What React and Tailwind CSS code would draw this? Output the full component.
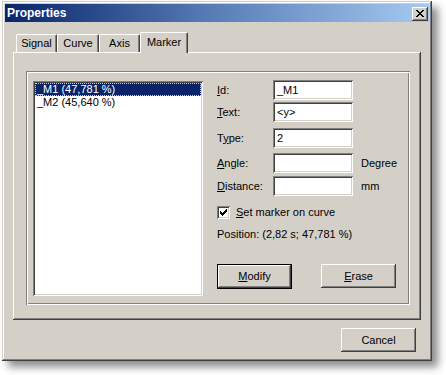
import React from "react";

const raised =
  "shadow-[inset_-1px_-1px_0_#404040,inset_1px_1px_0_#ffffff,inset_-2px_-2px_0_#808080]";
const sunken =
  "shadow-[inset_1px_1px_0_#808080,inset_-1px_-1px_0_#ffffff,inset_2px_2px_0_#404040,inset_-2px_-2px_0_#d4d0c8]";

function Pixels({ rows, color = "#000" }) {
  const h = rows.length;
  const w = rows[0].length;
  const rects = [];
  rows.forEach((r, y) =>
    r.split("").forEach((c, x) => {
      if (c === "X") rects.push(<rect key={x + "-" + y} x={x} y={y} width="1" height="1" fill={color} />);
    })
  );
  return (
    <svg width={w} height={h} viewBox={`0 0 ${w} ${h}`} shapeRendering="crispEdges" className="block">
      {rects}
    </svg>
  );
}

const closeX = [
  "XX....XX",
  ".XX..XX.",
  "..XXXX..",
  "...XX...",
  "..XXXX..",
  ".XX..XX.",
  "XX....XX",
];

const check = [
  "......X",
  ".....XX",
  "X...XXX",
  "XX.XXX.",
  "XXXXX..",
  ".XXX...",
  "..X....",
];

function Tab({ children, className, selected }) {
  if (selected) {
    return (
      <div
        className={`relative z-10 -mb-px h-[21px] bg-[#d4d0c8] border-t border-l border-white border-r border-r-[#404040] rounded-t-[2px] shadow-[inset_-1px_0_0_#808080] flex justify-center pt-[3px] leading-[13px] ${className}`}
      >
        {children}
      </div>
    );
  }
  return (
    <div
      className={`h-[18px] bg-[#d4d0c8] border-t border-l border-white border-r border-r-[#404040] rounded-t-[2px] shadow-[inset_-1px_0_0_#808080] flex justify-center pt-[2px] leading-[13px] ${className}`}
    >
      {children}
    </div>
  );
}

function Field({ label, value, unit, className }) {
  return (
    <div className={`flex items-center h-[20px] ${className}`}>
      <span className="w-[56px] leading-[13px]">{label}</span>
      <div className={`w-[80px] h-[20px] bg-white ${sunken} pl-[4px] leading-[20px]`}>{value}</div>
      {unit && <span className="ml-[8px] leading-[13px]">{unit}</span>}
    </div>
  );
}

export default function App() {
  return (
    <div className="w-[446px] h-[375px] bg-white pt-[1px] pl-[2px] font-['Liberation_Sans',Arial,sans-serif] text-[11px] text-black overflow-hidden">
      <div className="w-[430px] h-[360px] bg-[#d4d0c8] p-[3px] flex flex-col shadow-[inset_-1px_-1px_0_#404040,inset_1px_1px_0_#d4d0c8,inset_-2px_-2px_0_#808080,inset_2px_2px_0_#ffffff,6px_6px_8px_rgba(0,0,0,0.45)]">
        {/* Title bar */}
        <div className="h-[18px] flex items-start justify-between bg-linear-to-r from-[#0a246a] via-[#5a7fb8] to-[#a6caf0]">
          <span className="pl-[2px] pt-[2px] text-white font-bold text-[12px] leading-[14px]">Properties</span>
          <div className={`mt-[3px] mr-[1px] w-[16px] h-[14px] bg-[#d4d0c8] ${raised} flex items-center justify-center pr-[1px] pb-[1px]`}>
            <Pixels rows={closeX} />
          </div>
        </div>

        <div className="px-[8px] flex flex-col">
          {/* Tabs */}
          <div className="relative z-10 mt-[10px] h-[20px] flex items-end pl-[3px]">
            <Tab className="w-[41px]">Signal</Tab>
            <Tab className="w-[42px]">Curve</Tab>
            <Tab className="w-[41px]">Axis</Tab>
            <Tab className="w-[48px]" selected>
              Marker
            </Tab>
          </div>

          {/* Panel */}
          <div className={`h-[268px] w-[408px] bg-[#d4d0c8] ${raised} pt-[19px] pl-[13px]`}>
            <div className="w-[384px] h-[234px] shadow-[inset_1px_1px_0_#808080,inset_-1px_-1px_0_#ffffff,inset_2px_2px_0_#ffffff,inset_-2px_-2px_0_#808080] flex pl-[7px] pt-[9px]">
              {/* List box */}
              <div className={`mt-[1px] w-[170px] h-[215px] bg-white ${sunken} p-[2px] leading-[13px]`}>
                <div className="h-[13px] bg-[#0a246a] text-white border border-dotted border-[#e0d080] pl-[1px] leading-[11px]">
                  _M1 (47,781 %)
                </div>
                <div className="h-[13px] pl-[2px]">_M2 (45,640 %)</div>
              </div>

              {/* Right column */}
              <div className="ml-[14px] flex flex-col">
                <Field label={<><u>I</u>d:</>} value="_M1" />
                <Field className="mt-[2px]" label={<><u>T</u>ext:</>} value={"<y>"} />
                <Field className="mt-[6px]" label={<>T<u>y</u>pe:</>} value="2" />
                <Field className="mt-[5px]" label={<><u>A</u>ngle:</>} value="" unit="Degree" />
                <Field className="mt-[3px]" label={<><u>D</u>istance:</>} value="" unit="mm" />

                <div className="mt-[10px] flex items-center h-[13px]">
                  <div className={`w-[13px] h-[13px] bg-white ${sunken} flex items-center justify-center`}>
                    <Pixels rows={check} />
                  </div>
                  <span className="ml-[6px] leading-[13px]">
                    <u>S</u>et marker on curve
                  </span>
                </div>

                <div className="mt-[9px] leading-[13px]">Position: (2,82 s; 47,781 %)</div>

                <div className="mt-[23px] flex">
                  <div className="w-[75px] h-[25px] border border-black">
                    <div className={`w-full h-full bg-[#d4d0c8] ${raised} flex items-center justify-center leading-[13px]`}>
                      <span>
                        <u>M</u>odify
                      </span>
                    </div>
                  </div>
                  <div className={`ml-[29px] w-[75px] h-[24px] bg-[#d4d0c8] ${raised} flex items-center justify-center leading-[13px]`}>
                    <span>
                      <u>E</u>rase
                    </span>
                  </div>
                </div>
              </div>
            </div>
          </div>

          {/* Bottom buttons */}
          <div className="mt-[8px] flex justify-end pr-[5px]">
            <div className={`w-[75px] h-[24px] bg-[#d4d0c8] ${raised} flex items-center justify-center leading-[13px]`}>
              Cancel
            </div>
          </div>
        </div>
      </div>
    </div>
  );
}
